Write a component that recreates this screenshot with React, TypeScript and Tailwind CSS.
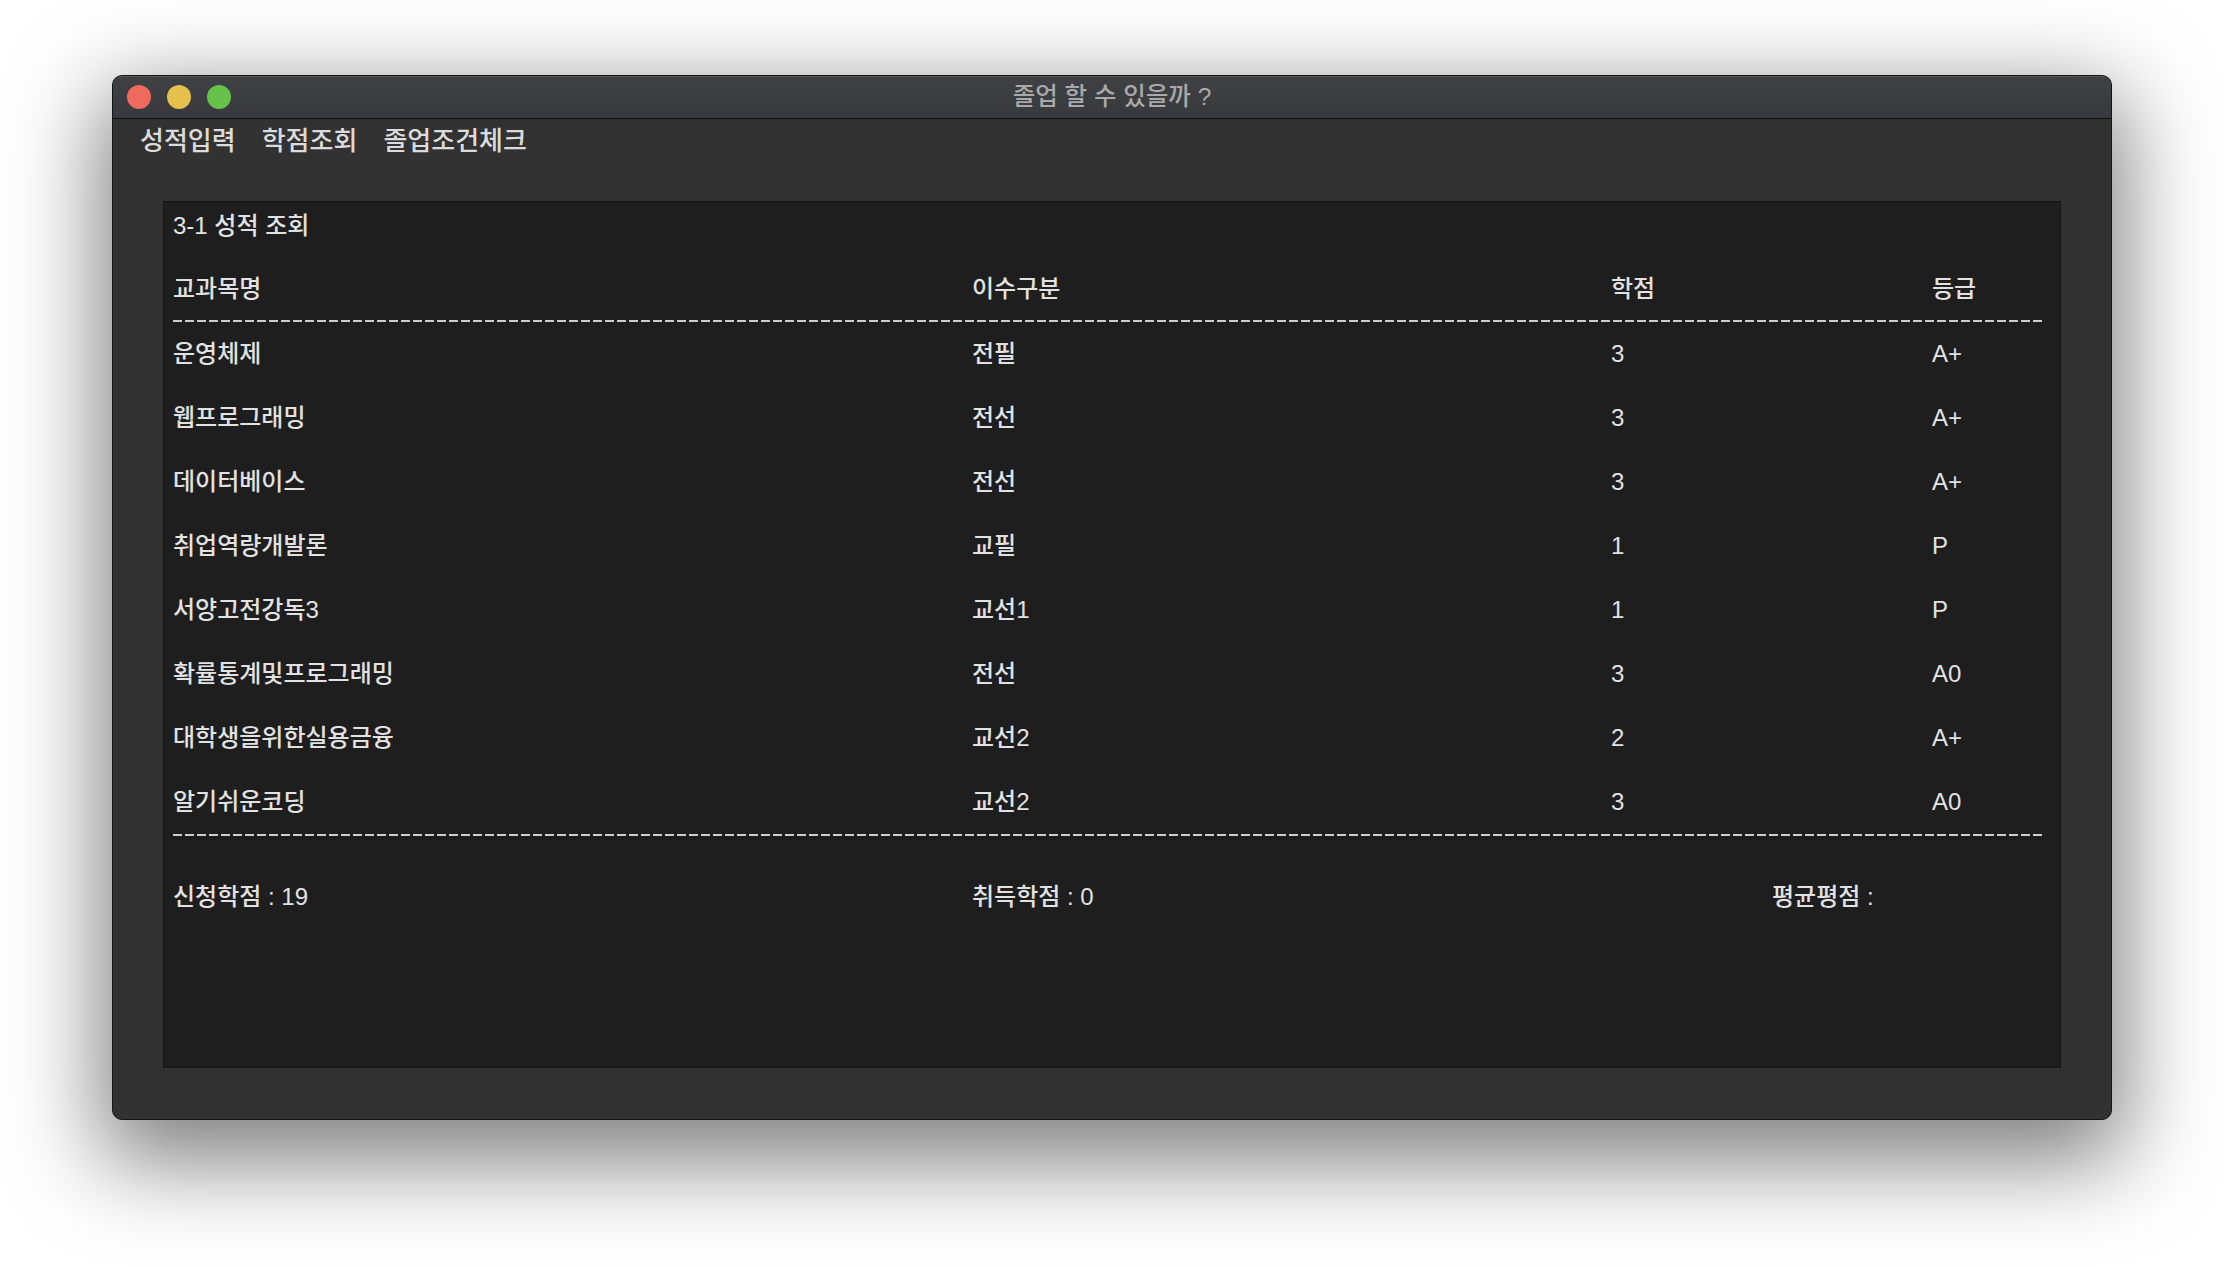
import React from "react";

const courses = [
  { name: "운영체제", type: "전필", credit: 3, grade: "A+" },
  { name: "웹프로그래밍", type: "전선", credit: 3, grade: "A+" },
  { name: "데이터베이스", type: "전선", credit: 3, grade: "A+" },
  { name: "취업역량개발론", type: "교필", credit: 1, grade: "P" },
  { name: "서양고전강독3", type: "교선1", credit: 1, grade: "P" },
  { name: "확률통계및프로그래밍", type: "전선", credit: 3, grade: "A0" },
  { name: "대학생을위한실용금융", type: "교선2", credit: 2, grade: "A+" },
  { name: "알기쉬운코딩", type: "교선2", credit: 3, grade: "A0" },
];

const Dashes = () => (
  <div className="h-[2px] w-full bg-[repeating-linear-gradient(90deg,#cdcdcd_0px,#cdcdcd_9px,transparent_9px,transparent_12px)]" />
);

export default function App() {
  const total = courses.reduce((s, c) => s + c.credit, 0);

  return (
    <div className="min-h-screen w-full bg-white flex justify-center pt-[75px] font-['Liberation_Sans','Noto_Sans_CJK_KR',sans-serif]">
      <div className="w-[2000px] h-[1045px] rounded-[10px] border border-[#141414] bg-[#323232] shadow-[0_30px_90px_12px_rgba(0,0,0,0.5)] overflow-hidden flex flex-col">
        {/* title bar */}
        <div className="h-[43px] shrink-0 grid grid-cols-[1fr_auto_1fr] items-center bg-gradient-to-b from-[#404144] to-[#38393c] border-b border-[#0c0c0c] shadow-[inset_0_1px_0_#58595c]">
          <div className="flex items-center gap-[16px] pl-[14px]">
            <span className="w-[24px] h-[24px] rounded-full bg-[#ee6a5e]" />
            <span className="w-[24px] h-[24px] rounded-full bg-[#e4c04c]" />
            <span className="w-[24px] h-[24px] rounded-full bg-[#67c24c]" />
          </div>
          <div className="text-[24.5px] text-[#a9a9aa] font-medium leading-none">졸업 할 수 있을까 ?</div>
          <div />
        </div>

        {/* menu */}
        <div className="h-[44px] shrink-0 flex items-center gap-[26px] pl-[27px] text-[26px] font-medium text-[#dcdcdc]">
          <span>성적입력</span>
          <span>학점조회</span>
          <span>졸업조건체크</span>
        </div>

        {/* panel */}
        <div className="mt-[38px] mx-[50px] h-[867px] shrink-0 bg-[#1e1e1e] border border-[#151515] pl-[9px] pr-[15px] text-[24px] font-medium text-[#e2e2e2]">
          <div className="h-[48px] flex items-center">3-1 성적 조회</div>

          <div className="mt-[8px] h-[62px] grid grid-cols-[799px_639px_321px_1fr] items-center">
            <span>교과목명</span>
            <span>이수구분</span>
            <span>학점</span>
            <span>등급</span>
          </div>
          <Dashes />

          {courses.map((c, i) => (
            <div key={i} className="h-[64px] grid grid-cols-[799px_639px_321px_1fr] items-center">
              <span>{c.name}</span>
              <span>{c.type}</span>
              <span>{c.credit}</span>
              <span>{c.grade}</span>
            </div>
          ))}
          <Dashes />

          <div className="mt-[29px] h-[64px] grid grid-cols-[799px_800px_1fr] items-center">
            <span>신청학점 : {total}</span>
            <span>취득학점 : 0</span>
            <span>평균평점 :</span>
          </div>
        </div>
      </div>
    </div>
  );
}
